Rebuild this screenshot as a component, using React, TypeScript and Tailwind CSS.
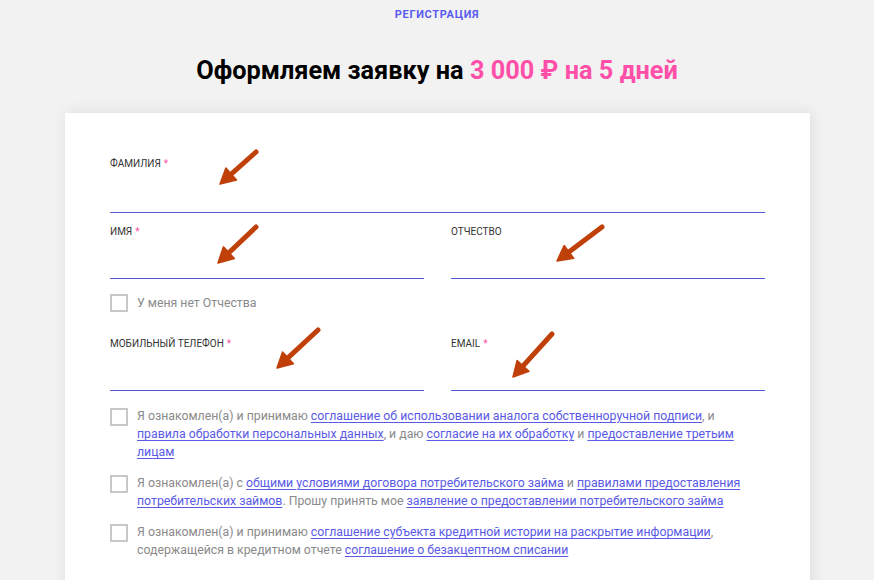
import React from 'react'

const ARROW = '#c0400a'

function Arrow({ left, top, w, h }: { left: number; top: number; w: number; h: number }) {
  const tx = 3
  const ty = h - 3
  const sx = w - 3
  const sy = 3
  const dx = tx - sx
  const dy = ty - sy
  const len = Math.hypot(dx, dy)
  const ux = dx / len
  const uy = dy / len
  const bx = tx - ux * 15
  const by = ty - uy * 15
  const px = -uy * 8
  const py = ux * 8
  return (
    <svg
      className="pointer-events-none absolute"
      style={{ left, top }}
      width={w}
      height={h}
      viewBox={`0 0 ${w} ${h}`}
    >
      <path d={`M${sx} ${sy} L${bx + ux * 3} ${by + uy * 3}`} stroke={ARROW} strokeWidth={5} strokeLinecap="round" />
      <polygon points={`${tx},${ty} ${bx + px},${by + py} ${bx - px},${by - py}`} fill={ARROW} stroke={ARROW} strokeWidth={1.5} strokeLinejoin="round" />
    </svg>
  )
}

function Field({
  label,
  required,
  tall,
  arrow,
}: {
  label: string
  required?: boolean
  tall?: boolean
  arrow: { left: number; top: number; w: number; h: number }
}) {
  return (
    <div className="relative">
      <div className="h-[12px] text-[10px] leading-[12px] text-[#333]">
        {label}
        {required && <span className="ml-[3px] text-[#ff4fa3]">*</span>}
      </div>
      <div className={`${tall ? 'h-[43px]' : 'h-[41px]'} border-b border-[#5454d4]`} />
      <Arrow {...arrow} />
    </div>
  )
}

function Box() {
  return <span className="mt-[1px] h-[18px] w-[18px] shrink-0 border-2 border-[#c8c8c8] bg-white" />
}

function A({ children }: { children: React.ReactNode }) {
  return <a className="cursor-pointer text-[#5a5ae6] underline underline-offset-2">{children}</a>
}

export default function App() {
  return (
    <div className="min-h-[580px] bg-[#f2f2f2] font-['Roboto',sans-serif]">
      <div className="pt-[8px] text-center text-[11px] font-bold leading-[13px] tracking-[0.06em] text-[#5b5bef]">
        РЕГИСТРАЦИЯ
      </div>
      <h1 className="mt-[35px] text-center text-[25.3px] font-bold leading-[30px] text-black">
        Оформляем заявку на <span className="text-[#ff4fa8]">3 000 ₽ на 5 дней</span>
      </h1>

      <div className="ml-[65px] mt-[27px] w-[745px] bg-white px-[45px] pb-[40px] pt-[45px] shadow-[2px_0_14px_rgba(0,0,0,0.09)]">
        <Field label="ФАМИЛИЯ" required tall arrow={{ left: 107, top: -9, w: 42, h: 38 }} />

        <div className="mt-[13px] grid grid-cols-2 gap-x-[27px]">
          <Field label="ИМЯ" required arrow={{ left: 105, top: -2, w: 44, h: 42 }} />
          <Field label="ОТЧЕСТВО" arrow={{ left: 103, top: -2, w: 51, h: 40 }} />
        </div>

        <label className="mt-[14px] flex items-center gap-[9px] text-[12.3px] leading-[18px] text-[#8a8a8a]">
          <Box />
          <span>У меня нет Отчества</span>
        </label>

        <div className="mt-[26px] grid grid-cols-2 gap-x-[27px]">
          <Field label="МОБИЛЬНЫЙ ТЕЛЕФОН" required arrow={{ left: 164, top: -11, w: 47, h: 44 }} />
          <Field label="EMAIL" required arrow={{ left: 59, top: -7, w: 45, h: 49 }} />
        </div>

        <div className="mt-[16px] flex flex-col gap-[13px] text-[12.3px] leading-[18px] text-[#8a8a8a]">
          <div className="flex items-start gap-[9px]">
            <Box />
            <p>
              Я ознакомлен(а) и принимаю <A>соглашение об использовании аналога собственноручной подписи</A>, и{' '}
              <A>правила обработки персональных данных</A>, и даю <A>согласие на их обработку</A> и{' '}
              <A>предоставление третьим лицам</A>
            </p>
          </div>
          <div className="flex items-start gap-[9px]">
            <Box />
            <p>
              Я ознакомлен(а) с <A>общими условиями договора потребительского займа</A> и{' '}
              <A>правилами предоставления потребительских займов</A>. Прошу принять мое{' '}
              <A>заявление о предоставлении потребительского займа</A>
            </p>
          </div>
          <div className="flex items-start gap-[9px]">
            <Box />
            <p>
              Я ознакомлен(а) и принимаю <A>соглашение субъекта кредитной истории на раскрытие информации</A>,
              содержащейся в кредитном отчете <A>соглашение о безакцептном списании</A>
            </p>
          </div>
        </div>
      </div>
    </div>
  )
}
